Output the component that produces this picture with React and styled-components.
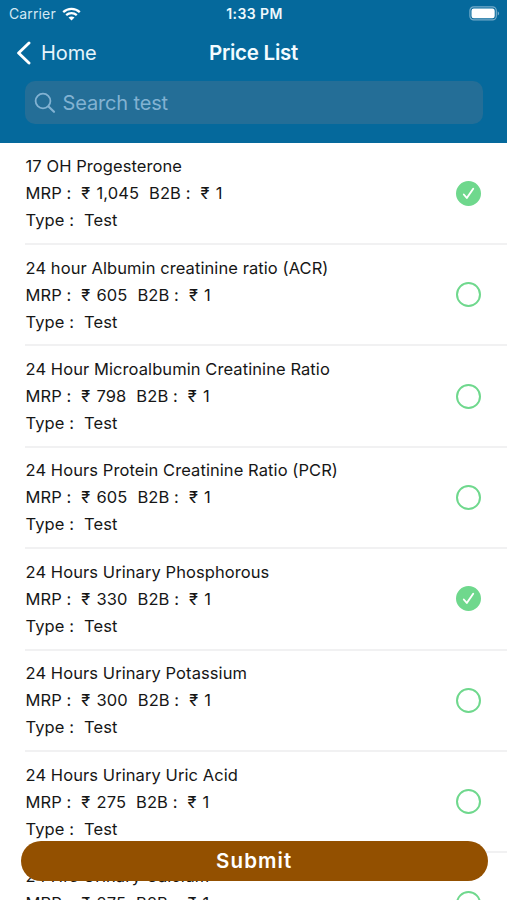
import React, { useState } from "react";
import styled, { createGlobalStyle } from "styled-components";

const GlobalStyle = createGlobalStyle`
  * { box-sizing: border-box; }
  body {
    margin: 0;
    font-family: Inter, Roboto, "Liberation Sans", sans-serif;
    background: #fff;
    -webkit-font-smoothing: antialiased;
  }
`;

const Screen = styled.div`
  position: relative;
  height: 900px;
  overflow: hidden;
  background: #fff;
`;

const Header = styled.header`
  height: 142.5px;
  background: #05699c;
  color: #fff;
`;

const StatusBar = styled.div`
  display: grid;
  grid-template-columns: 1fr auto 1fr;
  align-items: center;
  height: 27px;
  padding: 0 7px 0 9px;
`;

const Carrier = styled.div`
  display: flex;
  align-items: center;
  gap: 6px;
  font-size: 14px;
  letter-spacing: 0.13px;
  color: #d3e8f3;
`;

const Clock = styled.div`
  font-size: 14px;
  font-weight: 600;
  letter-spacing: 0.4px;
  color: #eef8fd;
`;

const BatteryIcon = styled.svg`
  justify-self: end;
  display: block;
`;

const NavBar = styled.nav`
  display: grid;
  grid-template-columns: 1fr auto 1fr;
  align-items: center;
  height: 50px;
  padding: 1px 16px 0;
`;

const BackButton = styled.button`
  display: flex;
  align-items: center;
  gap: 10px;
  padding: 0;
  border: 0;
  background: none;
  color: #e6f4fb;
  font: inherit;
  font-size: 20px;
  letter-spacing: -0.1px;
`;

const Title = styled.h1`
  margin: 0;
  font-size: 20.5px;
  font-weight: 600;
  letter-spacing: -0.25px;
  color: #f3fbff;
`;

const SearchField = styled.label`
  display: flex;
  align-items: center;
  gap: 6.5px;
  height: 43px;
  margin: 4px 24px 0 25px;
  padding: 0 10px 0 9px;
  border-radius: 10px;
  background: #246e97;
`;

const SearchInput = styled.input`
  flex: 1;
  min-width: 0;
  padding: 0;
  border: 0;
  outline: 0;
  background: none;
  color: #fff;
  font: inherit;
  font-size: 20px;
  letter-spacing: -0.15px;
  &::placeholder { color: #82b2d2; opacity: 1; }
`;

const TestList = styled.ul`
  margin: 0;
  padding: 1.1px 0 0;
  list-style: none;
`;

const TestRow = styled.li`
  display: flex;
  align-items: center;
  justify-content: space-between;
  height: 101.4px;
  margin-left: 25px;
  padding: 0 26.5px 0 0.5px;
  border-bottom: 2px solid #f1f1f2;
`;

const Details = styled.div`
  padding-top: 1px;
  font-size: 16.5px;
  line-height: 27px;
  letter-spacing: 0.08px;
  color: #161616;
  white-space: pre;
`;

const Line = styled.div`
  display: flex;
  gap: ${(p) => p.$gap || 0}px;
`;

const Amount = styled.span`
  word-spacing: 1.4px;
`;

const Toggle = styled.button`
  display: flex;
  align-items: center;
  justify-content: center;
  width: 25px;
  height: 25px;
  padding: 0;
  border: 2px solid #6fd88d;
  border-radius: 50%;
  background: ${(p) => (p.$on ? "#6fd88d" : "transparent")};
`;

const SubmitButton = styled.button`
  position: absolute;
  left: 20.5px;
  right: 19px;
  top: 841px;
  height: 39.5px;
  padding: 0;
  border: 0;
  border-radius: 20px;
  background: #935000;
  color: #fff;
  font: inherit;
  font-size: 20.5px;
  font-weight: 600;
  letter-spacing: 1.1px;
`;

const tests = [
  { name: "17 OH Progesterone", mrp: "1,045", selected: true },
  { name: "24 hour Albumin creatinine ratio (ACR)", mrp: "605" },
  { name: "24 Hour Microalbumin Creatinine Ratio", mrp: "798" },
  { name: "24 Hours Protein Creatinine Ratio (PCR)", mrp: "605" },
  { name: "24 Hours Urinary Phosphorous", mrp: "330", selected: true },
  { name: "24 Hours Urinary Potassium", mrp: "300" },
  { name: "24 Hours Urinary Uric Acid", mrp: "275" },
  { name: "24 Hrs Urinary Calcium", mrp: "275" },
];

function Wifi() {
  return (
    <svg width="19" height="14" viewBox="0 0 19 14" fill="none" stroke="#fff">
      <path d="M1.2 5.1C5.8.8 13.2.8 17.8 5.1" strokeWidth="2.3" />
      <path d="M4.2 8.2c3-2.7 7.6-2.7 10.6 0" strokeWidth="2.3" />
      <path d="M6.5 10.6c1.7-1.5 4.3-1.5 6 0l-3 3z" fill="#fff" stroke="none" />
    </svg>
  );
}

function Battery() {
  return (
    <BatteryIcon width="31" height="15" viewBox="0 0 31 15">
      <rect x=".9" y=".9" width="26.4" height="13" rx="3.8" fill="none" stroke="#75acca" strokeWidth="1.2" />
      <rect x="2.5" y="2.5" width="23.2" height="9.8" rx="2.2" fill="#fff" />
      <path d="M28.7 5.2v4.4c1.9-.8 1.9-3.6 0-4.4z" fill="#75acca" />
    </BatteryIcon>
  );
}

function Test({ test }) {
  const [on, setOn] = useState(Boolean(test.selected));
  return (
    <TestRow>
      <Details>
        <Line>{test.name}</Line>
        <Line $gap={10}>
          <span>MRP :</span>
          <Amount>₹ {test.mrp}</Amount>
          <span>B2B :</span>
          <Amount>₹ 1</Amount>
        </Line>
        <Line $gap={10}>
          <span>Type :</span>
          <span>Test</span>
        </Line>
      </Details>
      <Toggle $on={on} aria-pressed={on} aria-label={test.name} onClick={() => setOn(!on)}>
        {on && (
          <svg width="13" height="13" viewBox="0 0 13 13" fill="none" stroke="#fff" strokeWidth="1.9" strokeLinecap="round" strokeLinejoin="round">
            <path d="M1.8 7.5 4.8 11 11.2 1.8" />
          </svg>
        )}
      </Toggle>
    </TestRow>
  );
}

export default function App() {
  return (
    <Screen>
      <GlobalStyle />
      <Header>
        <StatusBar>
          <Carrier>Carrier <Wifi /></Carrier>
          <Clock>1:33 PM</Clock>
          <Battery />
        </StatusBar>
        <NavBar>
          <BackButton>
            <svg width="15" height="24" viewBox="0 0 15 24" fill="none" stroke="#fff" strokeWidth="2.9" strokeLinecap="round" strokeLinejoin="round">
              <path d="M13 2 2.6 12 13 22" />
            </svg>
            Home
          </BackButton>
          <Title>Price List</Title>
        </NavBar>
        <SearchField>
          <svg width="22" height="22" viewBox="0 0 22 22" fill="none" stroke="#82b2d2" strokeWidth="1.8" strokeLinecap="round">
            <circle cx="9" cy="9" r="7.4" />
            <path d="m14.5 14.5 5.5 5.3" strokeWidth="2.2" />
          </svg>
          <SearchInput placeholder="Search test" aria-label="Search test" />
        </SearchField>
      </Header>
      <TestList>
        {tests.map((test) => (
          <Test key={test.name} test={test} />
        ))}
      </TestList>
      <SubmitButton>Submit</SubmitButton>
    </Screen>
  );
}
